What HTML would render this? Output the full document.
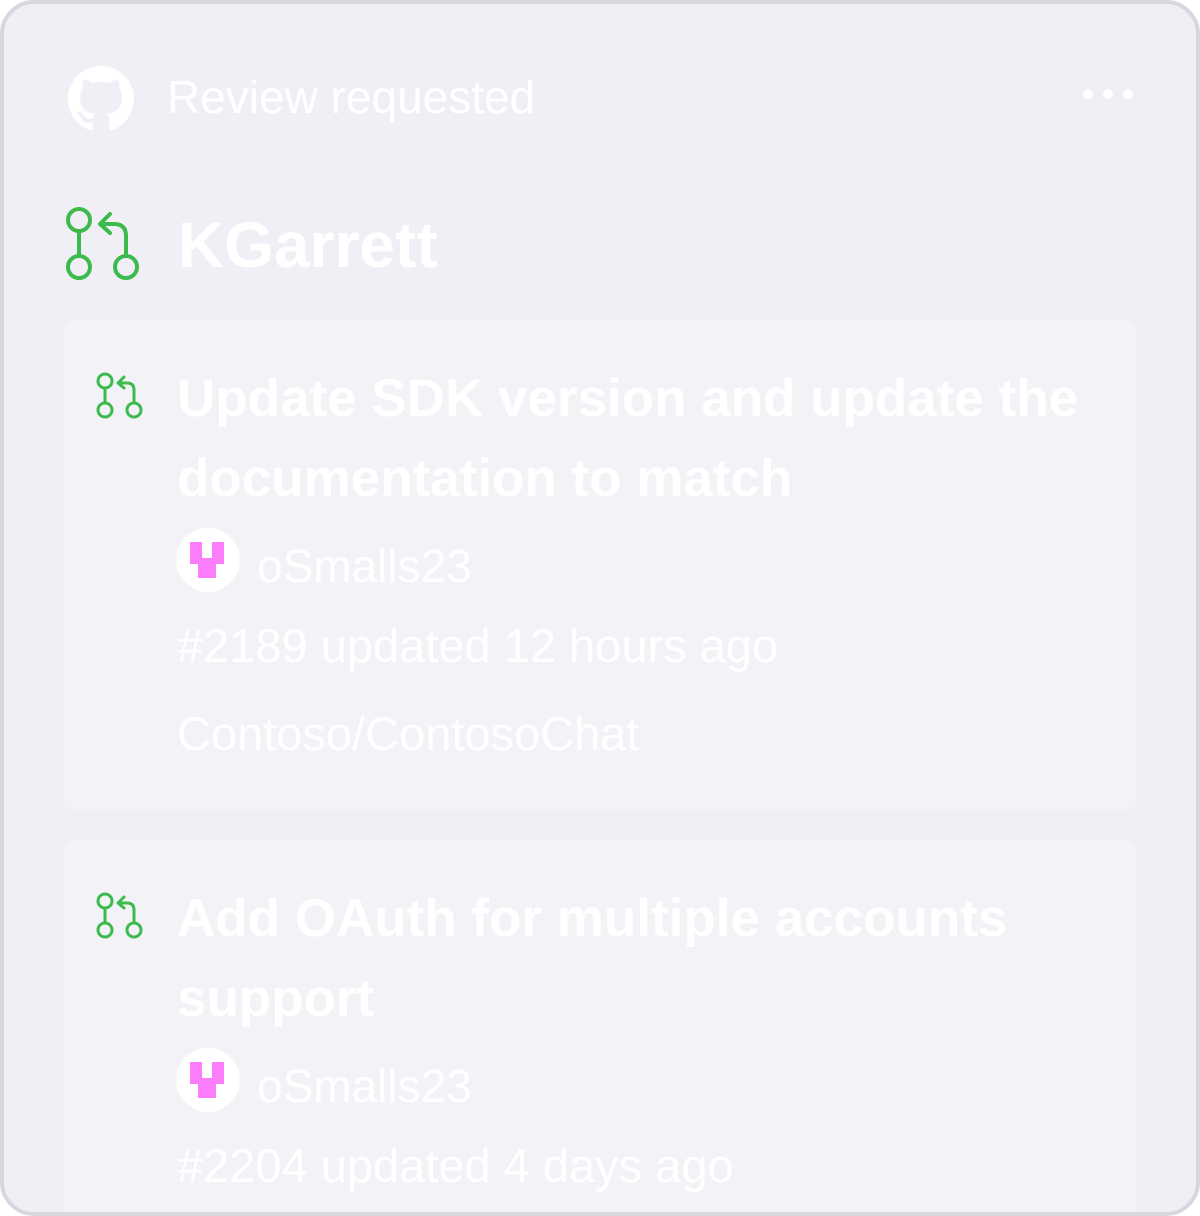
<!DOCTYPE html>
<html><head><style>
body{margin:0;width:1200px;height:1216px;background:#fff;font-family:"Liberation Sans",sans-serif;overflow:hidden}
.frame{position:absolute;left:0;top:0;width:1192px;height:1208px;border:4px solid #d9d7dd;border-radius:34px;background:#f1eff6;overflow:hidden}
.t{position:absolute;color:#fff;white-space:nowrap}
.card{position:absolute;left:60px;width:1072px;background:#f3f2f7;border-radius:10px}
</style></head><body>
<div class="frame">
<svg style="position:absolute;left:64px;top:62px" width="66" height="66" viewBox="0 0 16 16"><path fill="#fff" d="M8 0C3.58 0 0 3.58 0 8c0 3.54 2.290 6.53 5.47 7.59.4.07.55-.17.55-.38 0-.19-.01-.82-.01-1.49-2.01.37-2.530-.49-2.69-.94-.09-.23-.48-.94-.82-1.13-.28-.15-.68-.52-.01-.53.63-.01 1.08.58 1.23.82.72 1.21 1.87.87 2.33.66.07-.52.28-.87.51-1.07-1.78-.2-3.64-.89-3.64-3.95 0-.87.31-1.59.82-2.15-.08-.2-.36-1.02.08-2.12 0 0 .67-.21 2.2.82.64-.18 1.32-.27 2-.27.68 0 1.360.09 2 .27 1.53-1.04 2.2-.82 2.2-.82.44 1.1.16 1.92.08 2.12.51.56.82 1.27.82 2.15 0 3.07-1.87 3.75-3.65 3.95.29.25.54.73.54 1.48 0 1.07-.01 1.93-.01 2.2 0 .21.15.46.55.38A8.013 8.013 0 0016 8c0-4.42-3.58-8-8-8z"/></svg>
<div class="t" style="left:163px;top:66px;font-size:46px;font-weight:300">Review requested</div>
<svg style="position:absolute;left:1074px;top:80px" width="60" height="20"><circle cx="10" cy="10" r="5" fill="#fff"/><circle cx="30" cy="10" r="5" fill="#fff"/><circle cx="50" cy="10" r="5" fill="#fff"/></svg>
<svg style="position:absolute;left:56px;top:196px" width="90" height="90" fill="none" stroke="#3dba4e" stroke-width="4" stroke-linecap="round" stroke-linejoin="round"><circle cx="19" cy="20" r="11"/><circle cx="19" cy="67" r="11"/><circle cx="66" cy="67" r="11"/><path d="M19 31V56M66 56V36Q66 24 54 24H42M50 14L40 24L50 33"/></svg>
<div class="t" style="left:174px;top:204px;font-size:64px;font-weight:bold">KGarrett</div>
<div class="card" style="top:316px;height:490px"></div>
<div class="card" style="top:836px;height:400px"></div>
<svg style="position:absolute;left:88px;top:364px" width="56" height="56" fill="none" stroke="#3dba4e" stroke-width="3" stroke-linecap="round" stroke-linejoin="round"><circle cx="13" cy="13" r="7"/><circle cx="13" cy="42" r="7"/><circle cx="42" cy="42" r="7"/><path d="M13 20V35M42 35V22Q42 15 35 15H27M32 9L26 15L32 20"/></svg>
<svg style="position:absolute;left:88px;top:884px" width="56" height="56" fill="none" stroke="#3dba4e" stroke-width="3" stroke-linecap="round" stroke-linejoin="round"><circle cx="13" cy="13" r="7"/><circle cx="13" cy="42" r="7"/><circle cx="42" cy="42" r="7"/><path d="M13 20V35M42 35V22Q42 15 35 15H27M32 9L26 15L32 20"/></svg>
<div class="t" style="left:173px;top:355px;font-size:53px;font-weight:bold;line-height:80px">Update SDK version and update the<br>documentation to match</div>
<svg style="position:absolute;left:172px;top:524px" width="64" height="64"><circle cx="32" cy="32" r="32" fill="#fff"/><path fill="#fc7dfb" d="M14 14h12v8h10v-8h12v22h-8v14H22V36h-8z"/><rect x="26" y="22" width="10" height="8" fill="#fff"/></svg>
<div class="t" style="left:253px;top:535px;font-size:46px;font-weight:300">oSmalls23</div>
<div class="t" style="left:173px;top:614px;font-size:47px;font-weight:300">#2189 updated 12 hours ago</div>
<div class="t" style="left:173px;top:702px;font-size:47px;font-weight:300">Contoso/ContosoChat</div>
<div class="t" style="left:173px;top:875px;font-size:53px;font-weight:bold;line-height:80px">Add OAuth for multiple accounts<br>support</div>
<svg style="position:absolute;left:172px;top:1044px" width="64" height="64"><circle cx="32" cy="32" r="32" fill="#fff"/><path fill="#fc7dfb" d="M14 14h12v8h10v-8h12v22h-8v14H22V36h-8z"/><rect x="26" y="22" width="10" height="8" fill="#fff"/></svg>
<div class="t" style="left:253px;top:1055px;font-size:46px;font-weight:300">oSmalls23</div>
<div class="t" style="left:173px;top:1134px;font-size:47px;font-weight:300">#2204 updated 4 days ago</div>
</div>
</body></html>
